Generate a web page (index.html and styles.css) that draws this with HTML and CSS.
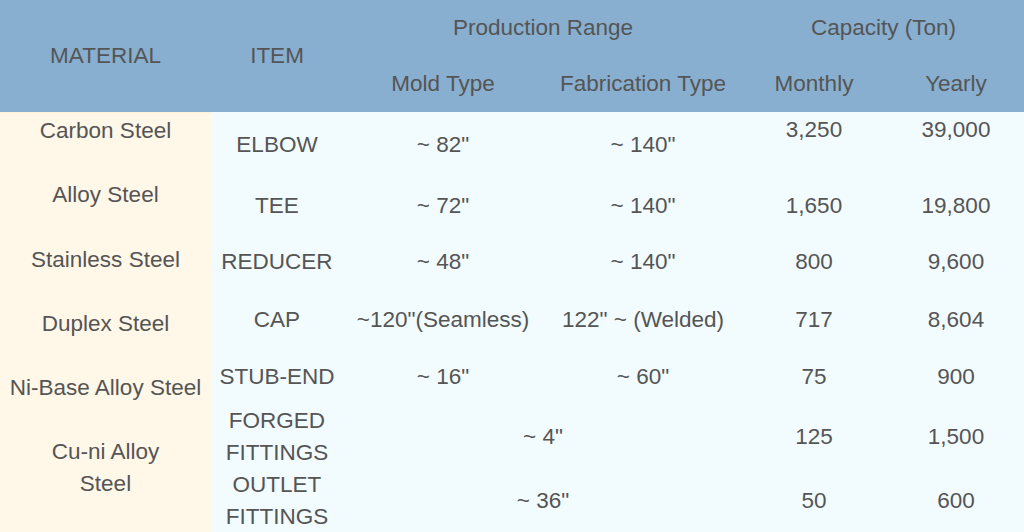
FILE: index.html
```html
<!DOCTYPE html>
<html lang="en">
<head>
<meta charset="utf-8">
<title>Production Capacity</title>
<link rel="stylesheet" href="styles.css">
</head>
<body>
<div class="table">
  <div class="th th-span2r c1">MATERIAL</div>
  <div class="th th-span2r c2">ITEM</div>
  <div class="th th-group c3">Production Range</div>
  <div class="th th-group c5">Capacity (Ton)</div>
  <div class="th">Mold Type</div>
  <div class="th">Fabrication Type</div>
  <div class="th">Monthly</div>
  <div class="th yearly">Yearly</div>

  <div class="materials">
    <p>Carbon Steel</p>
    <p>Alloy Steel</p>
    <p>Stainless Steel</p>
    <p>Duplex Steel</p>
    <p>Ni-Base Alloy Steel</p>
    <p>Cu-ni Alloy<br>Steel</p>
  </div>

  <div class="td">ELBOW</div>
  <div class="td">~ 82"</div>
  <div class="td">~ 140"</div>
  <div class="td top">3,250</div>
  <div class="td top yearly">39,000</div>

  <div class="td">TEE</div>
  <div class="td">~ 72"</div>
  <div class="td">~ 140"</div>
  <div class="td">1,650</div>
  <div class="td yearly">19,800</div>

  <div class="td">REDUCER</div>
  <div class="td">~ 48"</div>
  <div class="td">~ 140"</div>
  <div class="td">800</div>
  <div class="td yearly">9,600</div>

  <div class="td">CAP</div>
  <div class="td">~120"(Seamless)</div>
  <div class="td">122" ~ (Welded)</div>
  <div class="td">717</div>
  <div class="td yearly">8,604</div>

  <div class="td">STUB-END</div>
  <div class="td">~ 16"</div>
  <div class="td">~ 60"</div>
  <div class="td">75</div>
  <div class="td yearly">900</div>

  <div class="td">FORGED<br>FITTINGS</div>
  <div class="td span2">~ 4"</div>
  <div class="td">125</div>
  <div class="td yearly">1,500</div>

  <div class="td">OUTLET<br>FITTINGS</div>
  <div class="td span2">~ 36"</div>
  <div class="td">50</div>
  <div class="td yearly">600</div>
</div>
</body>
</html>
```

FILE: styles.css
```css
html, body {
  margin: 0;
  padding: 0;
  background: #f2fbfe;
}

.table {
  display: grid;
  grid-template-columns: 211px 132px 200px 200px 142px 139px;
  grid-template-rows: 56px 56px 66px 55px 58px 57px 57px 64px 64px;
  font-family: "Liberation Sans", Arial, sans-serif;
  font-size: 22.5px;
  color: #555555;
  background: #f2fbfe;
  width: 1024px;
}

.th {
  background: #88afd0;
  display: flex;
  align-items: center;
  justify-content: center;
  text-align: center;
  line-height: 28px;
}

.c1 { grid-column: 1; grid-row: 1 / span 2; }
.c2 { grid-column: 2; grid-row: 1 / span 2; }
.c3 { grid-column: 3 / span 2; grid-row: 1; }
.c5 { grid-column: 5 / span 2; grid-row: 1; }

.yearly {
  padding-left: 3px;
}

.materials {
  grid-column: 1;
  grid-row: 3 / span 7;
  background: #fff7e8;
  display: flex;
  flex-direction: column;
  align-items: center;
  gap: 32.3px;
  padding-top: 2px;
  text-align: center;
  line-height: 32px;
  border-top: 1px solid #fff3dc;
}

.materials p {
  margin: 0;
}

.td {
  display: flex;
  align-items: center;
  justify-content: center;
  text-align: center;
  line-height: 32px;
}

.td.top {
  align-items: flex-start;
  padding-top: 2px;
}

.td.span2 {
  grid-column: span 2;
}
```
